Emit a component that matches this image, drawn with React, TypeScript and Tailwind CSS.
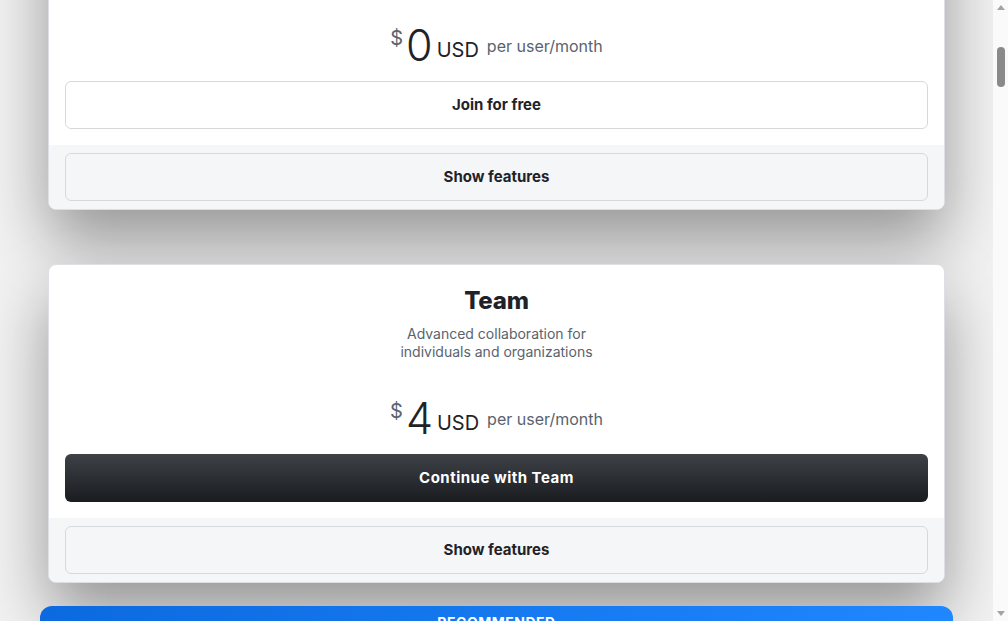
import React from "react";

type Plan = {
  name: string;
  blurb: string[];
  price: string;
  cta: string;
  dark?: boolean;
};

const plans: Plan[] = [
  {
    name: "Free",
    blurb: ["The basics for individuals", "and organizations"],
    price: "0",
    cta: "Join for free",
  },
  {
    name: "Team",
    blurb: ["Advanced collaboration for", "individuals and organizations"],
    price: "4",
    cta: "Continue with Team",
    dark: true,
  },
];

function PlanCard({ plan, className = "" }: { plan: Plan; className?: string }) {
  return (
    <div
      className={`rounded-lg border border-[#dcdfe3] bg-white shadow-[0_32px_64px_rgba(0,0,0,0.38)] overflow-hidden ${className}`}
    >
      {/* header */}
      <div className="px-4 pt-[22px] pb-4 flex flex-col items-center">
        <h3 className="text-[24px] leading-[28px] font-extrabold text-[#1f2328] tracking-[-0.2px]">
          {plan.name}
        </h3>
        <p className="mt-[10px] text-[14px] leading-[18px] text-[#59636e] text-center">
          {plan.blurb[0]}
          <br />
          {plan.blurb[1]}
        </p>
        <div className="mt-[38px] flex items-start text-[#1f2328]">
          <span className="text-[20px] leading-[20px] text-[#59636e] mt-[2px] mr-[3px]">$</span>
          <span className="text-[43px] leading-[40px] font-light mt-[-1px]">{plan.price}</span>
          <span className="text-[20px] leading-[20px] ml-[4px] mt-[14px]">USD</span>
          <span className="text-[16px] leading-[20px] text-[#59636e] ml-[8px] mt-[10px]">
            per user/month
          </span>
        </div>
        <button
          className={`mt-[16px] w-full h-[48px] rounded-md text-[15px] font-bold ${
            plan.dark
              ? "bg-gradient-to-b from-[#3e4247] to-[#1a1c20] text-white tracking-[0.5px]"
              : "border border-[#d6d9dc] bg-white text-[#1f2328]"
          }`}
        >
          {plan.cta}
        </button>
      </div>
      {/* footer */}
      <div className="bg-[#f5f6f8] px-4 pt-2 pb-2">
        <button className="w-full h-[48px] rounded-md border border-[#d6d9dc] bg-[#f5f6f8] text-[15px] font-bold text-[#1f2328]">
          Show features
        </button>
      </div>
    </div>
  );
}

function Scrollbar() {
  return (
    <div className="w-[15px] h-full bg-[#fafafa] flex flex-col items-center">
      <div className="h-[15px] flex items-center justify-center">
        <div className="w-0 h-0 border-l-[4px] border-r-[4px] border-b-[5px] border-l-transparent border-r-transparent border-b-[#a3a3a3]" />
      </div>
      <div className="mt-[32px] w-[8px] h-[40px] rounded-full bg-[#8a8a8a]" />
      <div className="flex-1" />
      <div className="h-[15px] flex items-center justify-center">
        <div className="w-0 h-0 border-l-[4px] border-r-[4px] border-t-[5px] border-l-transparent border-r-transparent border-t-[#a3a3a3]" />
      </div>
    </div>
  );
}

export default function App() {
  return (
    <div
      className="h-[621px] w-full flex overflow-hidden bg-[#f2f2f2]"
      style={{ fontFamily: "Inter, 'Noto Sans', sans-serif" }}
    >
      <div className="flex-1 h-full overflow-hidden">
        <div className="flex flex-col mt-[-109px]">
          <div className="px-[48px]">
            <PlanCard plan={plans[0]} />
          </div>
          <div className="px-[48px] mt-[54px]">
            <PlanCard plan={plans[1]} />
          </div>
          {/* recommended card, cut off at bottom */}
          <div className="px-[40px] mt-[23px]">
            <div className="rounded-t-xl bg-gradient-to-r from-[#0b6ae0] to-[#1f87ff] h-[40px] flex justify-center pt-[6px]">
              <span className="text-white text-[14px] font-bold tracking-[0.5px]">RECOMMENDED</span>
            </div>
          </div>
        </div>
      </div>
      <Scrollbar />
    </div>
  );
}
